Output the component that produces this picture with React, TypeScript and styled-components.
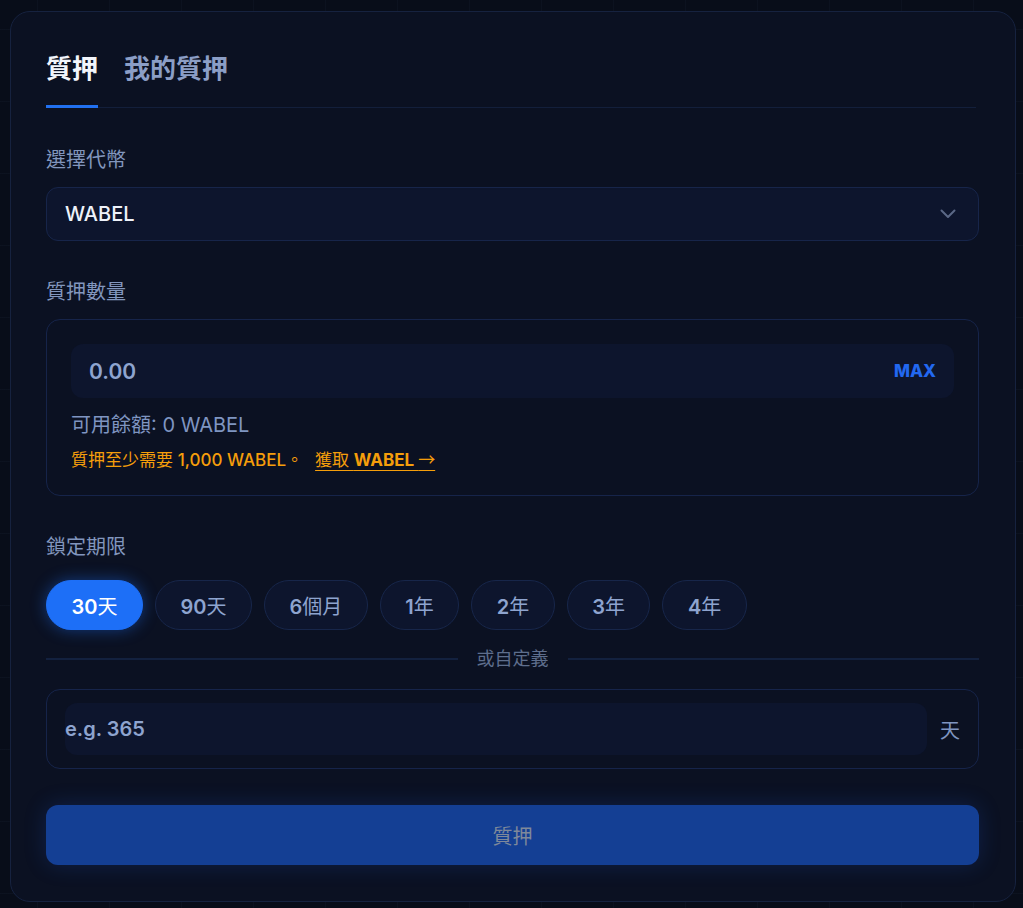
import React, { useState } from "react";
import styled, { createGlobalStyle, css } from "styled-components";

const FONT = `"Inter", "Noto Sans CJK TC", "Noto Sans", sans-serif`;
const CJK = `"Noto Sans CJK TC", "Noto Sans", sans-serif`;

const Global = createGlobalStyle`
  html, body {
    margin: 0;
    padding: 0;
    background-color: #080d19;
    background-image:
      linear-gradient(rgba(120, 150, 220, 0.035) 1px, transparent 1px),
      linear-gradient(90deg, rgba(120, 150, 220, 0.035) 1px, transparent 1px);
    background-size: 72px 72px;
    background-position: -35px -43px;
    font-family: ${FONT};
    -webkit-font-smoothing: antialiased;
  }
  * { box-sizing: border-box; }
`;

const Card = styled.div`
  margin: 11px 7px 7px 10px;
  padding: 35px 36px 36px 35px;
  background: #0b1122;
  border: 1px solid #16223f;
  border-radius: 20px;
  display: flex;
  flex-direction: column;
`;

const Tabs = styled.div`
  display: flex;
  gap: 26px;
  border-bottom: 1px solid #131f3b;
  margin-right: 3px;
`;

const Tab = styled.button<{ $active?: boolean }>`
  background: none;
  border: none;
  padding: 5px 0 19px;
  margin-bottom: -1px;
  font-family: ${FONT};
  font-size: 26px;
  line-height: 34px;
  font-weight: 700;
  cursor: pointer;
  color: ${(p) => (p.$active ? "#f2f5fb" : "#8b9ec6")};
  border-bottom: 3px solid ${(p) => (p.$active ? "#2170f0" : "transparent")};
`;

const Label = styled.div<{ $top: number; $gap: number }>`
  margin-top: ${(p) => p.$top}px;
  margin-bottom: ${(p) => p.$gap}px;
  font-size: 20px;
  line-height: 26px;
  color: #8296bd;
`;

const Select = styled.div`
  height: 54px;
  display: flex;
  align-items: center;
  justify-content: space-between;
  padding: 0 22px 0 18px;
  background: #0d152d;
  border: 1px solid #17254a;
  border-radius: 12px;
  font-size: 20px;
  font-weight: 500;
  color: #eef2fa;
`;

const Box = styled.div<{ $pad: string }>`
  border: 1px solid #16244a;
  border-radius: 14px;
  padding: ${(p) => p.$pad};
`;

const AmountField = styled.div`
  height: 54px;
  display: flex;
  align-items: center;
  justify-content: space-between;
  padding: 0 18px;
  background: #0d152d;
  border-radius: 12px;
`;

const AmountValue = styled.span`
  font-size: 21px;
  font-weight: 600;
  color: #8ea4cf;
`;

const MaxButton = styled.button`
  background: none;
  border: none;
  padding: 0;
  font-family: ${FONT};
  font-size: 17px;
  font-weight: 800;
  color: #2268f0;
  cursor: pointer;
`;

const Balance = styled.div`
  margin-top: 14px;
  font-size: 20px;
  line-height: 26px;
  color: #7f95c1;
`;

const Warning = styled.div`
  margin-top: 10px;
  font-size: 17px;
  line-height: 22px;
  font-weight: 400;
  color: #f59e0b;
`;

const Amount = styled.span`
  font-weight: 500;
`;

const GetLink = styled.a`
  margin-left: 12px;
  color: #f59e0b;
  text-decoration: underline;
  text-underline-offset: 4px;
  font-weight: 400;
  & b {
    font-weight: 700;
  }
`;

const Arrow = styled.span`
  font-family: ${CJK};
  font-weight: 400;
`;

const Pills = styled.div`
  display: flex;
  gap: 12px;
`;

const Pill = styled.button<{ $active?: boolean }>`
  height: 50px;
  padding: 0 24.5px;
  border-radius: 25px;
  font-family: ${FONT};
  font-size: 20px;
  font-weight: 400;
  cursor: pointer;
  ${(p) =>
    p.$active
      ? css`
          background: #1d6ff7;
          border: 1px solid #1d6ff7;
          color: #ffffff;
          box-shadow: 0 0 16px rgba(29, 111, 247, 0.45);
        `
      : css`
          background: #0d152d;
          border: 1px solid #17264a;
          color: #8ea4cf;
        `}
`;

const PillNum = styled.span`
  font-weight: 600;
`;

const Divider = styled.div`
  margin: 18px 0 19px;
  display: flex;
  align-items: center;
  gap: 19px;
  font-size: 18px;
  line-height: 22px;
  color: #5e6e8d;
  &::before,
  &::after {
    content: "";
    flex: 1;
    height: 2px;
    background: #13213f;
  }
`;

const CustomRow = styled.div`
  display: flex;
  align-items: center;
  gap: 13px;
`;

const CustomInput = styled.div`
  flex: 1;
  height: 52px;
  display: flex;
  align-items: center;
  background: #0d152d;
  border-radius: 12px;
  font-size: 20px;
  font-weight: 600;
  color: #8ea4cf;
`;

const Unit = styled.span`
  font-size: 20px;
  color: #7f95c1;
`;

const Submit = styled.button`
  margin-top: 36px;
  height: 60px;
  border: none;
  border-radius: 12px;
  background: #143f94;
  font-family: ${FONT};
  font-size: 20px;
  color: #7f899a;
  box-shadow: 0 0 22px rgba(30, 90, 220, 0.22);
  cursor: not-allowed;
`;

const Chevron = () => (
  <svg width="16" height="10" viewBox="0 0 16 10" fill="none">
    <path d="M1.5 1.5 8 8l6.5-6.5" stroke="#5b6886" strokeWidth="2" strokeLinecap="round" strokeLinejoin="round" />
  </svg>
);

const periods: [string, string][] = [
  ["30", "天"],
  ["90", "天"],
  ["6", "個月"],
  ["1", "年"],
  ["2", "年"],
  ["3", "年"],
  ["4", "年"],
];

export default function App() {
  const [tab, setTab] = useState(0);
  const [period, setPeriod] = useState(0);

  return (
    <>
      <Global />
      <Card>
        <Tabs>
          <Tab $active={tab === 0} onClick={() => setTab(0)}>質押</Tab>
          <Tab $active={tab === 1} onClick={() => setTab(1)}>我的質押</Tab>
        </Tabs>

        <Label $top={39} $gap={14}>選擇代幣</Label>
        <Select>
          <span>WABEL</span>
          <Chevron />
        </Select>

        <Label $top={38} $gap={14}>質押數量</Label>
        <Box $pad="24px 24px 24px 24px">
          <AmountField>
            <AmountValue>0.00</AmountValue>
            <MaxButton>MAX</MaxButton>
          </AmountField>
          <Balance>可用餘額: 0 WABEL</Balance>
          <Warning>
            質押至少需要 <Amount>1,000 WABEL</Amount>。
            <GetLink>
              獲取 <b>WABEL <Arrow>→</Arrow></b>
            </GetLink>
          </Warning>
        </Box>

        <Label $top={38} $gap={20}>鎖定期限</Label>
        <Pills>
          {periods.map(([n, u], i) => (
            <Pill key={n + u} $active={period === i} onClick={() => setPeriod(i)}>
              <PillNum>{n}</PillNum>
              {u}
            </Pill>
          ))}
        </Pills>

        <Divider>或自定義</Divider>

        <Box $pad="13px 18px">
          <CustomRow>
            <CustomInput>e.g. 365</CustomInput>
            <Unit>天</Unit>
          </CustomRow>
        </Box>

        <Submit>質押</Submit>
      </Card>
    </>
  );
}
